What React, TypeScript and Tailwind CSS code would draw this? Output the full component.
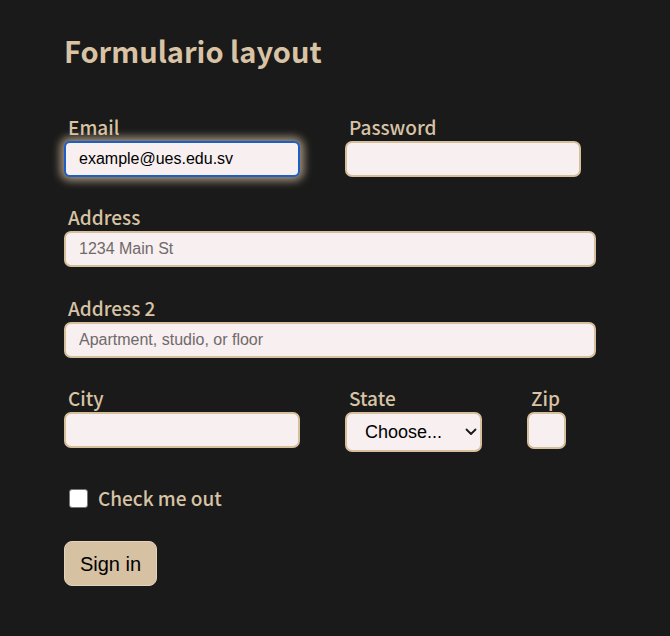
import React from "react";

const labelCls =
  "block pl-1 mb-[2px] text-[19px] leading-6 text-[#d8c3a5] font-medium";
const inputCls =
  "block h-9 rounded-[7px] border-2 border-[#d6bf9c] bg-[#f7eff0] px-[13px] text-[16px] text-black placeholder:text-[#6f6a6a] outline-none";

function Field({
  label,
  className,
  children,
}: {
  label: string;
  className?: string;
  children: React.ReactNode;
}) {
  return (
    <div className={className}>
      <label className={labelCls}>{label}</label>
      {children}
    </div>
  );
}

export default function App() {
  return (
    <div
      className="min-h-screen bg-[#1a1a1a] pl-16 pt-8"
      style={{ fontFamily: '"Noto Sans CJK JP", "Noto Sans", sans-serif' }}
    >
      <h1 className="text-[29px] leading-9 font-bold text-[#d8c3a5]">
        Formulario layout
      </h1>

      <form className="mt-[47px] w-[532px]">
        <div className="flex">
          <Field label="Email" className="w-[281px]">
            <input
              type="email"
              defaultValue="example@ues.edu.sv"
              className="block h-9 w-[236px] rounded-[6px] border-2 border-[#1d5fc6] bg-[#f7eff0] px-[13px] text-[16px] text-black outline-none shadow-[0_0_9px_4px_rgba(216,195,165,0.7)] font-['Liberation_Sans',Arial,sans-serif]"
            />
          </Field>
          <Field label="Password">
            <input
              type="password"
              className={`${inputCls} w-[236px] font-['Liberation_Sans',Arial,sans-serif]`}
            />
          </Field>
        </div>

        <Field label="Address" className="mt-[28px]">
          <input
            placeholder="1234 Main St"
            className={`${inputCls} w-full font-['Liberation_Sans',Arial,sans-serif]`}
          />
        </Field>

        <Field label="Address 2" className="mt-[29px]">
          <input
            placeholder="Apartment, studio, or floor"
            className={`${inputCls} w-full font-['Liberation_Sans',Arial,sans-serif]`}
          />
        </Field>

        <div className="flex mt-[28px]">
          <Field label="City" className="w-[281px]">
            <input
              className={`${inputCls} w-[236px] font-['Liberation_Sans',Arial,sans-serif]`}
            />
          </Field>
          <Field label="State" className="w-[182px]">
            <div className="relative w-[137px]">
              <select
                defaultValue=""
                className="block h-10 w-[137px] appearance-none rounded-[7px] border-2 border-[#d6bf9c] bg-[#f7eff0] pl-[18px] text-[18px] text-black outline-none font-['Liberation_Sans',Arial,sans-serif]"
              >
                <option value="">Choose...</option>
                <option>...</option>
              </select>
              <svg
                className="pointer-events-none absolute right-[5px] top-[16px]"
                width="12"
                height="8"
                viewBox="0 0 12 8"
                fill="none"
              >
                <path
                  d="M1.5 1.5 L6 6 L10.5 1.5"
                  stroke="#1a1a1a"
                  strokeWidth="1.8"
                  strokeLinecap="round"
                  strokeLinejoin="round"
                />
              </svg>
            </div>
          </Field>
          <Field label="Zip">
            <input
              className={`${inputCls} h-[37px] w-[39px] px-1 font-['Liberation_Sans',Arial,sans-serif]`}
            />
          </Field>
        </div>

        <div className="mt-[34px] flex items-center pl-[5px]">
          <input
            type="checkbox"
            className="h-[19px] w-[19px] appearance-none rounded-[3px] border border-[#767676] bg-white"
          />
          <label className="ml-[10px] text-[19px] leading-6 font-medium text-[#d8c3a5]">
            Check me out
          </label>
        </div>

        <button
          type="button"
          className="mt-[31px] h-[45px] w-[93px] rounded-[8px] border border-[#e3d3bb] bg-[#d6c1a3] text-[20px] text-black font-['Liberation_Sans',Arial,sans-serif]"
        >
          Sign in
        </button>
      </form>
    </div>
  );
}
